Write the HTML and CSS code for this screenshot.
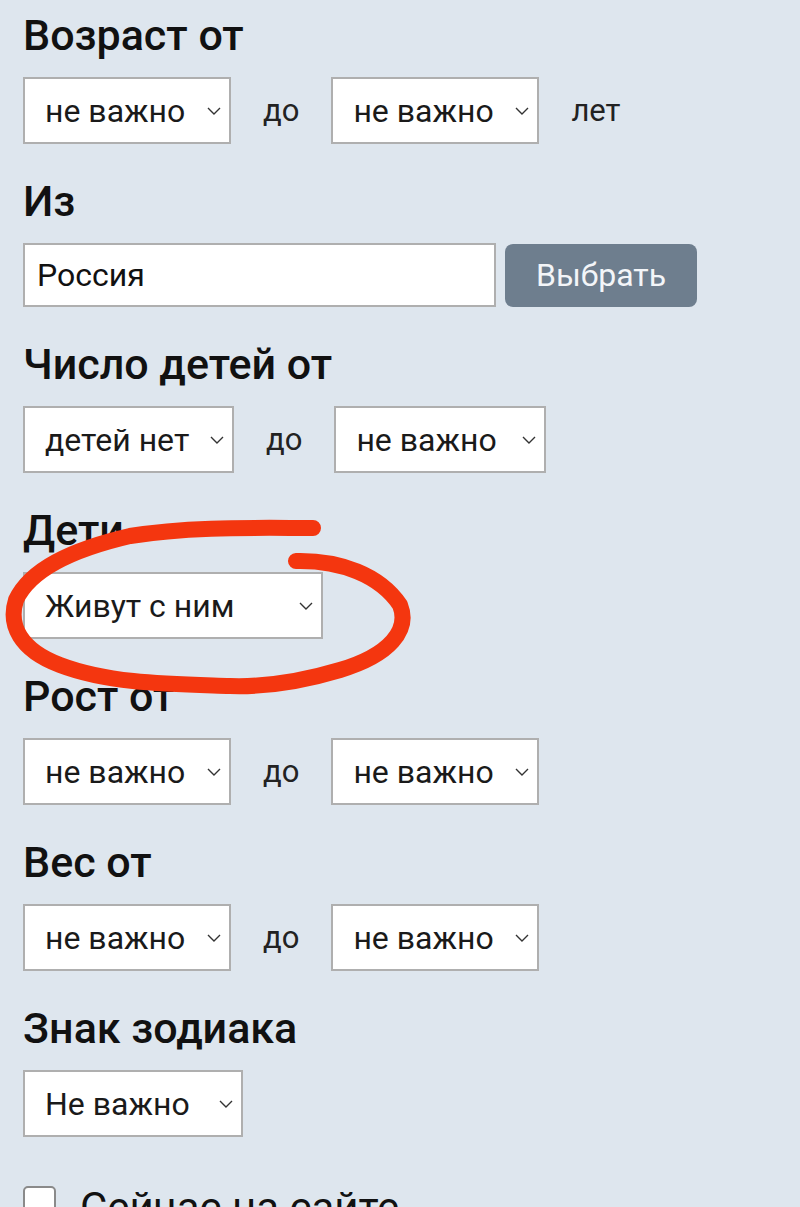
FILE: index.html
```html
<!DOCTYPE html>
<html lang="ru">
<head>
<meta charset="utf-8">
<title>Поиск</title>
<link rel="stylesheet" href="styles.css">
</head>
<body>
<div class="form">
  <div class="group">
    <div class="label">Возраст от</div>
    <div class="row">
      <div class="select w208"><span>не важно</span><svg class="chev" viewBox="0 0 14 8"><polyline points="1,1 7,7 13,1"/></svg></div>
      <span class="sep">до</span>
      <div class="select w208"><span>не важно</span><svg class="chev" viewBox="0 0 14 8"><polyline points="1,1 7,7 13,1"/></svg></div>
      <span class="sep">лет</span>
    </div>
  </div>
  <div class="group">
    <div class="label">Из</div>
    <div class="row tight">
      <div class="input">Россия</div>
      <div class="btn">Выбрать</div>
    </div>
  </div>
  <div class="group">
    <div class="label">Число детей от</div>
    <div class="row">
      <div class="select w211"><span>детей нет</span><svg class="chev" viewBox="0 0 14 8"><polyline points="1,1 7,7 13,1"/></svg></div>
      <span class="sep">до</span>
      <div class="select w212"><span>не важно</span><svg class="chev" viewBox="0 0 14 8"><polyline points="1,1 7,7 13,1"/></svg></div>
    </div>
  </div>
  <div class="group">
    <div class="label">Дети</div>
    <div class="row">
      <div class="select w300"><span>Живут с ним</span><svg class="chev" viewBox="0 0 14 8"><polyline points="1,1 7,7 13,1"/></svg></div>
    </div>
  </div>
  <div class="group">
    <div class="label">Рост от</div>
    <div class="row">
      <div class="select w208"><span>не важно</span><svg class="chev" viewBox="0 0 14 8"><polyline points="1,1 7,7 13,1"/></svg></div>
      <span class="sep">до</span>
      <div class="select w208"><span>не важно</span><svg class="chev" viewBox="0 0 14 8"><polyline points="1,1 7,7 13,1"/></svg></div>
    </div>
  </div>
  <div class="group">
    <div class="label">Вес от</div>
    <div class="row">
      <div class="select w208"><span>не важно</span><svg class="chev" viewBox="0 0 14 8"><polyline points="1,1 7,7 13,1"/></svg></div>
      <span class="sep">до</span>
      <div class="select w208"><span>не важно</span><svg class="chev" viewBox="0 0 14 8"><polyline points="1,1 7,7 13,1"/></svg></div>
    </div>
  </div>
  <div class="group">
    <div class="label">Знак зодиака</div>
    <div class="row">
      <div class="select w220"><span>Не важно</span><svg class="chev" viewBox="0 0 14 8"><polyline points="1,1 7,7 13,1"/></svg></div>
    </div>
  </div>
  <div class="check">
    <span class="box"></span>
    <span class="check-text">Сейчас на сайте</span>
  </div>
</div>
<svg class="mark" viewBox="0 0 800 1207" width="800" height="1207">
  <path d="M 296 561 C 340 560, 380 575, 400 605 C 410 630, 390 655, 340 670 C 300 682, 260 687, 230 686 C 170 684, 110 684, 60 665 C 20 650, 8 625, 16 600 C 30 570, 70 550, 130 536 C 190 526, 260 528, 313 528"/>
</svg>
</body>
</html>
```

FILE: styles.css
```css
html, body {
  margin: 0;
  padding: 0;
}
body {
  background: #dee6ee;
  font-family: Roboto, "Liberation Sans", sans-serif;
  color: #151515;
  overflow: hidden;
  height: 1207px;
  position: relative;
}
.form {
  padding: 11px 23px 0;
}
.group {
  margin-bottom: 33px;
}
.label {
  font-size: 43px;
  line-height: 49px;
  font-weight: 500;
  color: #111;
  margin-bottom: 17px;
}
.row {
  display: flex;
  align-items: center;
  gap: 32px;
}
.row.tight {
  gap: 9px;
}
.select {
  box-sizing: border-box;
  height: 67px;
  background: #fff;
  border: 2px solid #afafaf;
  display: flex;
  align-items: center;
  justify-content: space-between;
  padding: 0 8px 0 20px;
  font-size: 32px;
  color: #1a1a1a;
}
.w208 { width: 208px; }
.w211 { width: 211px; }
.w212 { width: 212px; }
.w220 { width: 220px; }
.w300 { width: 300px; }
.chev {
  width: 14px;
  height: 8px;
  fill: none;
  stroke: #333;
  stroke-width: 1.4;
}
.sep {
  font-size: 31px;
  color: #222;
}
.input {
  box-sizing: border-box;
  width: 473px;
  height: 64px;
  background: #fff;
  border: 2px solid #afafaf;
  display: flex;
  align-items: center;
  padding-left: 12px;
  font-size: 32px;
  color: #111;
}
.btn {
  box-sizing: border-box;
  width: 192px;
  height: 63px;
  border-radius: 8px;
  background: #6e7e8e;
  color: #f3f5f8;
  font-size: 32px;
  display: flex;
  align-items: center;
  justify-content: center;
}
.check {
  display: flex;
  align-items: flex-start;
  gap: 24px;
  margin-top: 49px;
}
.box {
  box-sizing: border-box;
  width: 33px;
  height: 33px;
  border: 2px solid #8a8a8a;
  border-radius: 5px;
  background: #fff;
}
.check-text {
  font-size: 42px;
  line-height: 49px;
  margin-top: -3px;
  color: #111;
}
.mark {
  position: absolute;
  left: 0;
  top: 0;
  pointer-events: none;
}
.mark path {
  fill: none;
  stroke: #f4360f;
  stroke-width: 16;
  stroke-linecap: round;
  stroke-linejoin: round;
}
```
